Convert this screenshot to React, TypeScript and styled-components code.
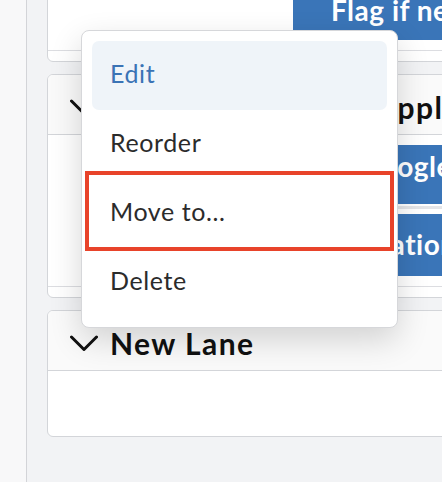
import React from "react";
import styled, { createGlobalStyle } from "styled-components";

const GlobalStyle = createGlobalStyle`
  html, body {
    margin: 0;
    padding: 0;
    height: 100%;
    overflow: hidden;
    background: #ffffff;
    font-family: "Lato", "Noto Sans", sans-serif;
  }
  #root {
    height: 100%;
  }
`;

const Page = styled.div`
  display: flex;
  height: 482px;
  overflow: hidden;
  position: relative;
`;

const SideStrip = styled.div`
  width: 26px;
  flex-shrink: 0;
  background: #f8f8f9;
  border-right: 1px solid #d3d4d8;
`;

const Main = styled.main`
  flex: 1;
  background: #f2f3f5;
  padding-left: 20px;
  overflow: hidden;
`;

const Board = styled.div`
  display: flex;
  flex-direction: column;
  gap: 12px;
  width: 620px;
  margin-top: -90px;
`;

const Lane = styled.section`
  background: #ffffff;
  border: 1px solid #d3d5d9;
  border-radius: 6px;
  overflow: hidden;
`;

const LaneHeader = styled.header`
  display: flex;
  align-items: center;
  gap: 12px;
  height: 60px;
  padding: 4px 0 0 22px;
  box-sizing: border-box;
  background: #fafafa;
  border-bottom: 1px solid #d3d5d9;
`;

const Chevron = styled.svg`
  width: 28px;
  height: 16px;
  flex-shrink: 0;
`;

const LaneTitle = styled.h2`
  margin: 0;
  font-size: 30px;
  font-weight: 700;
  letter-spacing: 1.45px;
  color: #111111;
  white-space: nowrap;
`;

const LaneBody = styled.div<{ $empty?: boolean }>`
  display: flex;
  flex-direction: column;
  padding: ${(p) => (p.$empty ? "0" : "10px 0")};
  height: ${(p) => (p.$empty ? "65px" : "auto")};
  border-bottom: ${(p) => (p.$empty ? "none" : "1px solid #dcdde1")};
  padding-left: 245px;
`;

const LaneFooter = styled.div`
  height: 10px;
`;

const Divider = styled.div`
  height: 3px;
  margin: 2px 0 5px;
  background: #e4e5e8;
`;

const ActionButton = styled.div<{ $height: number; $pad: number; $indent: number }>`
  height: ${(p) => p.$height}px;
  box-sizing: border-box;
  padding: ${(p) => p.$pad}px 0 0 ${(p) => p.$indent}px;
  background: #3a75b8;
  border-radius: 4px;
  color: #ffffff;
  font-size: 28px;
  font-weight: 700;
  letter-spacing: 0.5px;
  line-height: 32px;
  white-space: nowrap;
  overflow: hidden;
`;

const Menu = styled.div`
  position: absolute;
  left: 81px;
  top: 30px;
  width: 317px;
  box-sizing: border-box;
  padding: 10px;
  background: #ffffff;
  border: 1px solid #d6d7da;
  border-radius: 8px;
  box-shadow: 0 12px 32px rgba(0, 0, 0, 0.16);
  display: flex;
  flex-direction: column;
`;

const MenuItem = styled.div<{ $active?: boolean }>`
  height: 69px;
  display: flex;
  align-items: center;
  padding: 0 0 5px 18px;
  box-sizing: border-box;
  border-radius: 7px;
  background: ${(p) => (p.$active ? "#eff4f9" : "transparent")};
  color: ${(p) => (p.$active ? "#3a73b5" : "#2b2b2b")};
  font-size: 25px;
  letter-spacing: 0.6px;
`;

const Highlight = styled.div`
  position: absolute;
  left: 3px;
  top: 140px;
  width: 309px;
  height: 80px;
  box-sizing: border-box;
  border: 4px solid #e8432a;
  pointer-events: none;
`;

const ChevronIcon = () => (
  <Chevron viewBox="0 0 28 16">
    <polyline
      points="1.5,2 14,14.5 26.5,2"
      fill="none"
      stroke="#111111"
      strokeWidth="3"
      strokeLinecap="round"
      strokeLinejoin="round"
    />
  </Chevron>
);

const App: React.FC = () => {
  return (
    <>
      <GlobalStyle />
      <Page>
        <SideStrip />
        <Main>
          <Board>
            <Lane>
              <LaneHeader>
                <ChevronIcon />
                <LaneTitle>Screening</LaneTitle>
              </LaneHeader>
              <LaneBody>
                <ActionButton $height={59} $pad={13} $indent={38}>
                  Flag if needed
                </ActionButton>
              </LaneBody>
              <LaneFooter />
            </Lane>

            <Lane>
              <LaneHeader>
                <ChevronIcon />
                <LaneTitle>{"Interview Review\u200A Applicants"}</LaneTitle>
              </LaneHeader>
              <LaneBody>
                <ActionButton $height={59} $pad={5} $indent={67}>
                  Google Sheets
                </ActionButton>
                <Divider />
                <ActionButton $height={62} $pad={14} $indent={9}>
                  Notification
                </ActionButton>
              </LaneBody>
              <LaneFooter />
            </Lane>

            <Lane>
              <LaneHeader>
                <ChevronIcon />
                <LaneTitle>New Lane</LaneTitle>
              </LaneHeader>
              <LaneBody $empty />
            </Lane>
          </Board>
        </Main>

        <Menu>
          <MenuItem $active>Edit</MenuItem>
          <MenuItem>Reorder</MenuItem>
          <MenuItem>Move to...</MenuItem>
          <MenuItem>Delete</MenuItem>
          <Highlight />
        </Menu>
      </Page>
    </>
  );
};

export default App;
